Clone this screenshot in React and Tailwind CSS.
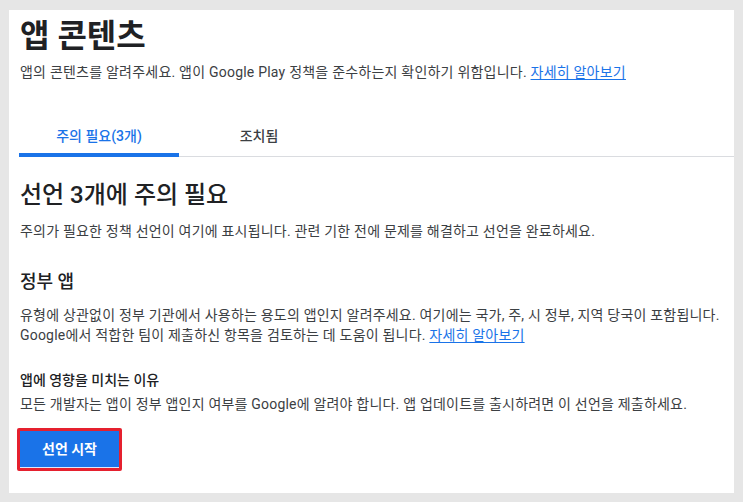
import React from "react";

const font = { fontFamily: '"Roboto", "Noto Sans CJK KR", sans-serif' };

const Link = ({ children }) => (
  <a href="#" className="text-[#1a73e8] underline underline-offset-2">
    {children}
  </a>
);

export default function App() {
  return (
    <div
      className="w-[743px] h-[502px] bg-[#e6e6e6] pt-[10px] pl-[9px] pr-[9px]"
      style={font}
    >
      <div className="h-[483px] bg-white pl-[11px] pr-[10px] pt-[6px]">
        <h1 className="text-[32px] leading-[40px] font-bold text-[#202124]">
          앱 콘텐츠
        </h1>
        <p className="mt-[6px] text-[14px] leading-[20px] tracking-[0.22px] text-[#3c4043]">
          앱의 콘텐츠를 알려주세요. 앱이 Google Play 정책을 준수하는지 확인하기 위함입니다.{" "}
          <Link>자세히 알아보기</Link>
        </p>

        {/* tabs */}
        <div className="mt-[34px] -ml-px -mr-[10px] flex border-b border-[#dadce0]">
          <button className="relative w-[160px] h-[40px] text-[14px] font-medium text-[#1a73e8]">
            주의 필요(3개)
            <span className="absolute left-0 right-0 -bottom-px h-[4px] bg-[#1a73e8]" />
          </button>
          <button className="w-[160px] h-[40px] text-[14px] font-medium text-[#3c4043]">
            조치됨
          </button>
        </div>

        <h2 className="mt-[22px] text-[24px] leading-[32px] font-medium text-[#202124]">
          선언 3개에 주의 필요
        </h2>
        <p className="mt-[10px] text-[14px] leading-[20px] tracking-[0.2px] text-[#3c4043]">
          주의가 필요한 정책 선언이 여기에 표시됩니다. 관련 기한 전에 문제를 해결하고 선언을 완료하세요.
        </p>

        <h3 className="mt-[29px] text-[18px] leading-[24px] font-medium text-[#202124]">
          정부 앱
        </h3>
        <p className="mt-[11px] text-[14px] leading-[20px] tracking-[0.2px] text-[#3c4043]">
          유형에 상관없이 정부 기관에서 사용하는 용도의 앱인지 알려주세요. 여기에는 국가, 주, 시 정부, 지역 당국이 포함됩니다.
          <br />
          Google에서 적합한 팀이 제출하신 항목을 검토하는 데 도움이 됩니다.{" "}
          <Link>자세히 알아보기</Link>
        </p>

        <h4 className="mt-[25px] text-[14px] leading-[20px] font-medium text-[#202124]">
          앱에 영향을 미치는 이유
        </h4>
        <p className="mt-[4px] text-[14px] leading-[20px] tracking-[0.2px] text-[#3c4043]">
          모든 개발자는 앱이 정부 앱인지 여부를 Google에 알려야 합니다. 앱 업데이트를 출시하려면 이 선언을 제출하세요.
        </p>

        <div className="mt-[14px] -ml-[3px] w-[105px] h-[43px] border-[3px] border-[#e5202e] rounded-[2px]">
          <button className="w-full h-full bg-[#1a73e8] border-b border-[#dbe8fb] text-white text-[14px] font-bold">
            선언 시작
          </button>
        </div>
      </div>
    </div>
  );
}
